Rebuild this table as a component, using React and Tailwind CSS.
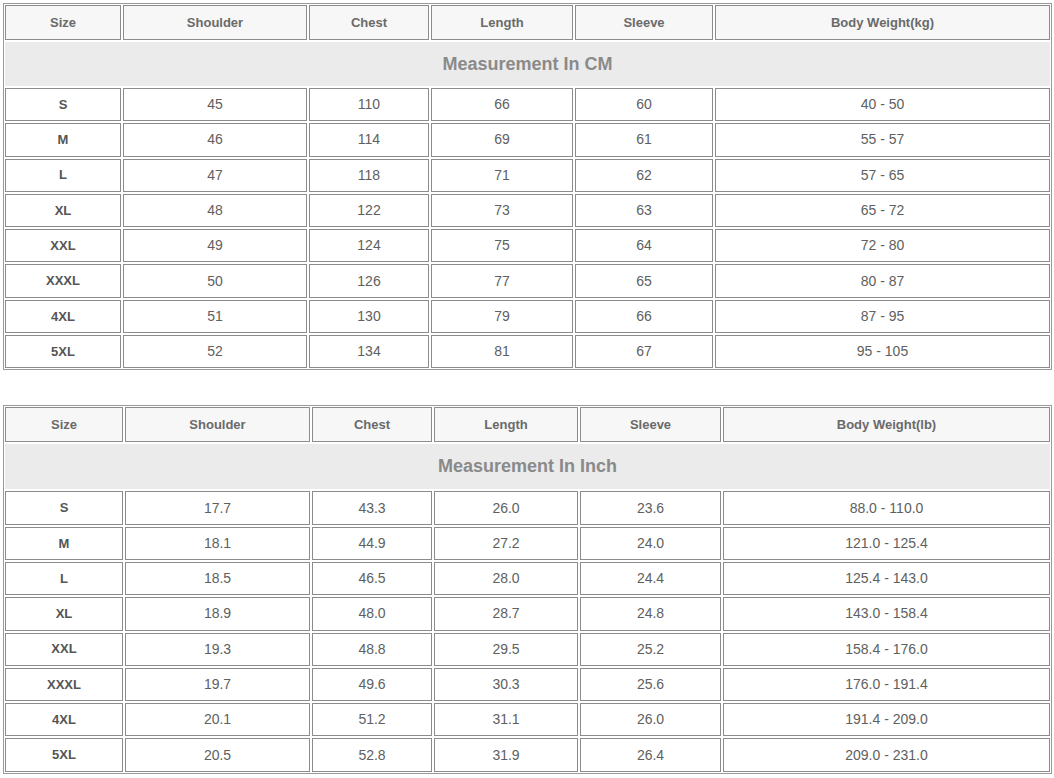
const cols = ["Size", "Shoulder", "Chest", "Length", "Sleeve"];

const cmRows = [
  ["S", "45", "110", "66", "60", "40 - 50"],
  ["M", "46", "114", "69", "61", "55 - 57"],
  ["L", "47", "118", "71", "62", "57 - 65"],
  ["XL", "48", "122", "73", "63", "65 - 72"],
  ["XXL", "49", "124", "75", "64", "72 - 80"],
  ["XXXL", "50", "126", "77", "65", "80 - 87"],
  ["4XL", "51", "130", "79", "66", "87 - 95"],
  ["5XL", "52", "134", "81", "67", "95 - 105"],
];

const inchRows = [
  ["S", "17.7", "43.3", "26.0", "23.6", "88.0 - 110.0"],
  ["M", "18.1", "44.9", "27.2", "24.0", "121.0 - 125.4"],
  ["L", "18.5", "46.5", "28.0", "24.4", "125.4 - 143.0"],
  ["XL", "18.9", "48.0", "28.7", "24.8", "143.0 - 158.4"],
  ["XXL", "19.3", "48.8", "29.5", "25.2", "158.4 - 176.0"],
  ["XXXL", "19.7", "49.6", "30.3", "25.6", "176.0 - 191.4"],
  ["4XL", "20.1", "51.2", "31.1", "26.0", "191.4 - 209.0"],
  ["5XL", "20.5", "52.8", "31.9", "26.4", "209.0 - 231.0"],
];

function SizeTable({ title, weightLabel, rows, gridCols, bandH, className }) {
  const cell = "flex items-center justify-center border border-[#8c8c8c]";

  return (
    <div className={`w-[1049px] border border-[#9a9a9a] p-px ${className}`}>
      <div className="flex flex-col gap-[2px]">
        {/* header */}
        <div className={`grid gap-[2px] ${gridCols}`}>
          {[...cols, weightLabel].map((c) => (
            <div
              key={c}
              className={`${cell} h-[35px] bg-[#f7f7f7] text-[13px] font-bold text-[#6a6a6a]`}
            >
              {c}
            </div>
          ))}
        </div>

        {/* measurement band */}
        <div
          className={`flex items-center justify-center bg-[#ebebeb] text-[18px] font-bold text-[#8a8a8a] ${bandH}`}
        >
          {title}
        </div>

        {/* data rows */}
        {rows.map((r) => (
          <div key={r[0]} className={`grid gap-[2px] ${gridCols}`}>
            {r.map((v, i) => (
              <div
                key={i}
                className={`${cell} h-[33.3px] bg-white ${
                  i === 0
                    ? "text-[13px] font-bold text-[#555]"
                    : "text-[14px] text-[#606060]"
                }`}
              >
                {v}
              </div>
            ))}
          </div>
        ))}
      </div>
    </div>
  );
}

export default function App() {
  return (
    <div
      className="min-h-screen w-[1054px] bg-white pl-[3px] pt-[3px]"
      style={{ fontFamily: '"Liberation Sans", Arial, sans-serif' }}
    >
      <SizeTable
        title="Measurement In CM"
        weightLabel="Body Weight(kg)"
        rows={cmRows}
        gridCols="grid-cols-[116px_184px_120px_142px_138px_335px]"
        bandH="h-[44px]"
      />
      <SizeTable
        title="Measurement In Inch"
        weightLabel="Body Weight(lb)"
        rows={inchRows}
        gridCols="grid-cols-[118px_185px_120px_144px_141px_327px]"
        bandH="h-[45px]"
        className="mt-[35px]"
      />
    </div>
  );
}
